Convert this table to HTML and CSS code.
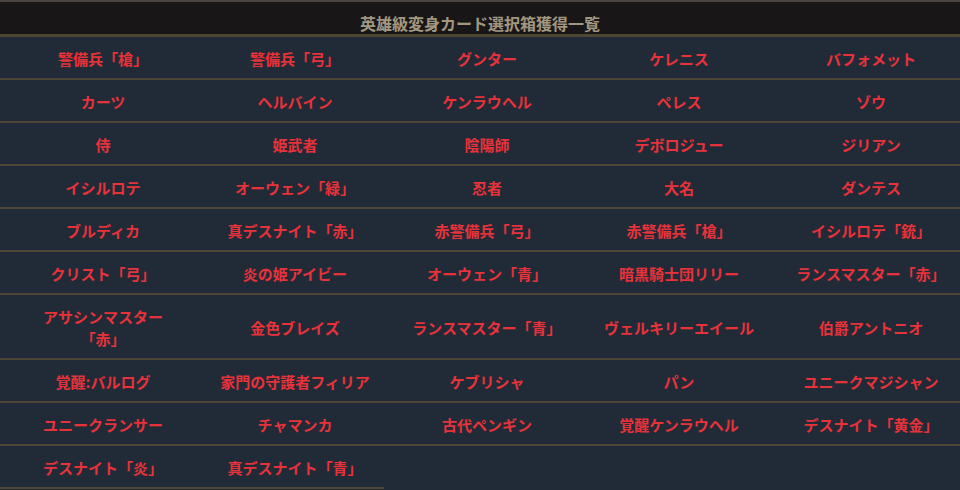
FILE: index.html
```html
<!DOCTYPE html>
<html lang="ja">
<head>
<meta charset="utf-8">
<title>英雄級変身カード選択箱獲得一覧</title>
<link rel="stylesheet" href="styles.css">
</head>
<body>
<div class="box">
  <div class="title">英雄級変身カード選択箱獲得一覧</div>
  <div class="list">
    <div class="cell">警備兵「槍」</div>
    <div class="cell">警備兵「弓」</div>
    <div class="cell">グンター</div>
    <div class="cell">ケレニス</div>
    <div class="cell">バフォメット</div>

    <div class="cell">カーツ</div>
    <div class="cell">ヘルバイン</div>
    <div class="cell">ケンラウヘル</div>
    <div class="cell">ペレス</div>
    <div class="cell">ゾウ</div>

    <div class="cell">侍</div>
    <div class="cell">姫武者</div>
    <div class="cell">陰陽師</div>
    <div class="cell">デボロジュー</div>
    <div class="cell">ジリアン</div>

    <div class="cell">イシルロテ</div>
    <div class="cell">オーウェン「緑」</div>
    <div class="cell">忍者</div>
    <div class="cell">大名</div>
    <div class="cell">ダンテス</div>

    <div class="cell">ブルディカ</div>
    <div class="cell">真デスナイト「赤」</div>
    <div class="cell">赤警備兵「弓」</div>
    <div class="cell">赤警備兵「槍」</div>
    <div class="cell">イシルロテ「銃」</div>

    <div class="cell">クリスト「弓」</div>
    <div class="cell">炎の姫アイビー</div>
    <div class="cell">オーウェン「青」</div>
    <div class="cell">暗黒騎士団リリー</div>
    <div class="cell">ランスマスター「赤」</div>

    <div class="cell">アサシンマスター「赤」</div>
    <div class="cell">金色ブレイズ</div>
    <div class="cell">ランスマスター「青」</div>
    <div class="cell">ヴェルキリーエイール</div>
    <div class="cell">伯爵アントニオ</div>

    <div class="cell">覚醒:バルログ</div>
    <div class="cell">家門の守護者フィリア</div>
    <div class="cell">ケブリシャ</div>
    <div class="cell">パン</div>
    <div class="cell">ユニークマジシャン</div>

    <div class="cell">ユニークランサー</div>
    <div class="cell">チャマンカ</div>
    <div class="cell">古代ペンギン</div>
    <div class="cell">覚醒ケンラウヘル</div>
    <div class="cell">デスナイト「黄金」</div>

    <div class="cell">デスナイト「炎」</div>
    <div class="cell">真デスナイト「青」</div>
  </div>
</div>
</body>
</html>
```
FILE: styles.css
```css
html, body {
  margin: 0;
  padding: 0;
  background: #212a37;
}

body {
  font-family: "Noto Sans CJK JP", "Noto Sans", sans-serif;
  font-weight: 700;
}

.box {
  width: 960px;
  overflow: hidden;
}

.title {
  border-top: 2px solid #4a4542;
  border-bottom: 3px solid #4f4535;
  background: #181616;
  color: #a19781;
  font-size: 16px;
  line-height: 16px;
  text-align: center;
  padding: 13px 0 3px;
}

.list {
  display: grid;
  grid-template-columns: repeat(5, 192px);
  background: #212a37;
}

.cell {
  display: flex;
  align-items: center;
  justify-content: center;
  text-align: center;
  color: #e8323a;
  font-size: 15px;
  line-height: 22px;
  padding: 11px 13px 8px 27px;
  border-bottom: 2px solid #4f4535;
}
```
